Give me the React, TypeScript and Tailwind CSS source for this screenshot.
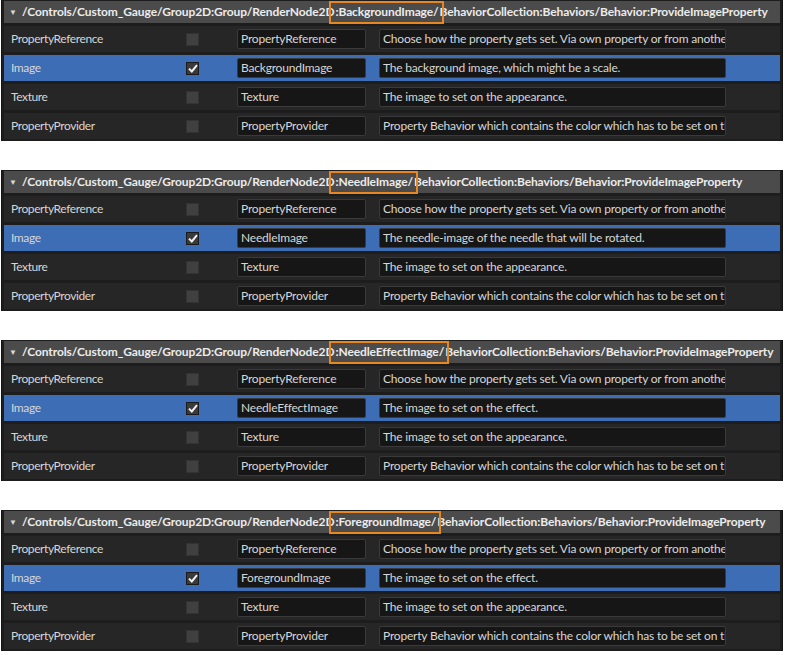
import React from "react";

interface Row {
  label: string;
  checked: boolean;
  value: string;
  desc: string;
}

interface PanelData {
  node: string;
  image: string;
  imageDesc: string;
}

const panels: PanelData[] = [
  { node: ":BackgroundImage/", image: "BackgroundImage", imageDesc: "The background image, which might be a scale." },
  { node: ":NeedleImage/", image: "NeedleImage", imageDesc: "The needle-image of the needle that will be rotated." },
  { node: ":NeedleEffectImage/", image: "NeedleEffectImage", imageDesc: "The image to set on the effect." },
  { node: ":ForegroundImage/", image: "ForegroundImage", imageDesc: "The image to set on the effect." },
];

const rowsFor = (p: PanelData): Row[] => [
  { label: "PropertyReference", checked: false, value: "PropertyReference", desc: "Choose how the property gets set. Via own property or from another" },
  { label: "Image", checked: true, value: p.image, desc: p.imageDesc },
  { label: "Texture", checked: false, value: "Texture", desc: "The image to set on the appearance." },
  { label: "PropertyProvider", checked: false, value: "PropertyProvider", desc: "Property Behavior which contains the color which has to be set on the" },
];

const Checkbox = ({ checked }: { checked: boolean }) => (
  <div
    className={
      checked
        ? "w-[13px] h-[13px] bg-[#3a3a3a] border border-[#1a1a1a] flex items-center justify-center"
        : "w-[13px] h-[13px] bg-[#404040] border border-[#333333]"
    }
  >
    {checked && (
      <svg width="10" height="9" viewBox="0 0 10 9">
        <path d="M1 4.6 L3.8 7.4 L9 1.2" stroke="#f2f2f2" strokeWidth="2" fill="none" />
      </svg>
    )}
  </div>
);

const Panel = ({ data }: { data: PanelData }) => (
  <div className="w-[782px] h-[141px] bg-[#1d1d1d] border-l border-r border-[#141414] pt-[1px] pl-[2px] pr-[2px]">
    <div className="h-[22px] bg-[#4b4b4b] flex items-center pl-[5px] whitespace-nowrap overflow-visible">
      <span className="text-[8px] text-[#d8d8d8] mr-[5px] leading-none">▼</span>
      <span className="text-[12px] font-bold text-[#ececec] tracking-[-0.1px] flex items-center">
        /Controls/Custom_Gauge/Group2D:Group/RenderNode2D
        <span className="relative -ml-[5px] -mr-[4px] pl-[4px] pr-[3px] h-[23px] flex items-center border-2 border-[#e8861f]">
          {data.node}
        </span>
        BehaviorCollection:Behaviors/Behavior:ProvideImageProperty
      </span>
    </div>
    <div className="flex flex-col gap-[3px] mt-[3px]">
      {rowsFor(data).map((r) => (
        <div
          key={r.label}
          className={
            (r.checked ? "bg-[#3d6db4]" : "bg-[#262626]") +
            " h-[26px] flex items-center text-[12px] text-[#d6d6d6] tracking-[-0.2px]"
          }
        >
          <div className="w-[182px] pl-[7px] tracking-[-0.4px]">{r.label}</div>
          <Checkbox checked={r.checked} />
          <div className="ml-[38px] w-[129px] h-[20px] bg-[#161616] border border-[#3a3a3a] rounded-[2px] pl-[3px] flex items-center overflow-hidden whitespace-nowrap">
            {r.value}
          </div>
          <div className="ml-[13px] w-[347px] h-[20px] bg-[#161616] border border-[#3a3a3a] rounded-[2px] pl-[3px] flex items-center overflow-hidden whitespace-nowrap">
            {r.desc}
          </div>
        </div>
      ))}
    </div>
  </div>
);

export default function App() {
  return (
    <div className="w-[785px] h-[655px] bg-white font-['Lato','Liberation_Sans',sans-serif] flex flex-col gap-[29px] pl-[1px]">
      {panels.map((p) => (
        <Panel key={p.node} data={p} />
      ))}
    </div>
  );
}
